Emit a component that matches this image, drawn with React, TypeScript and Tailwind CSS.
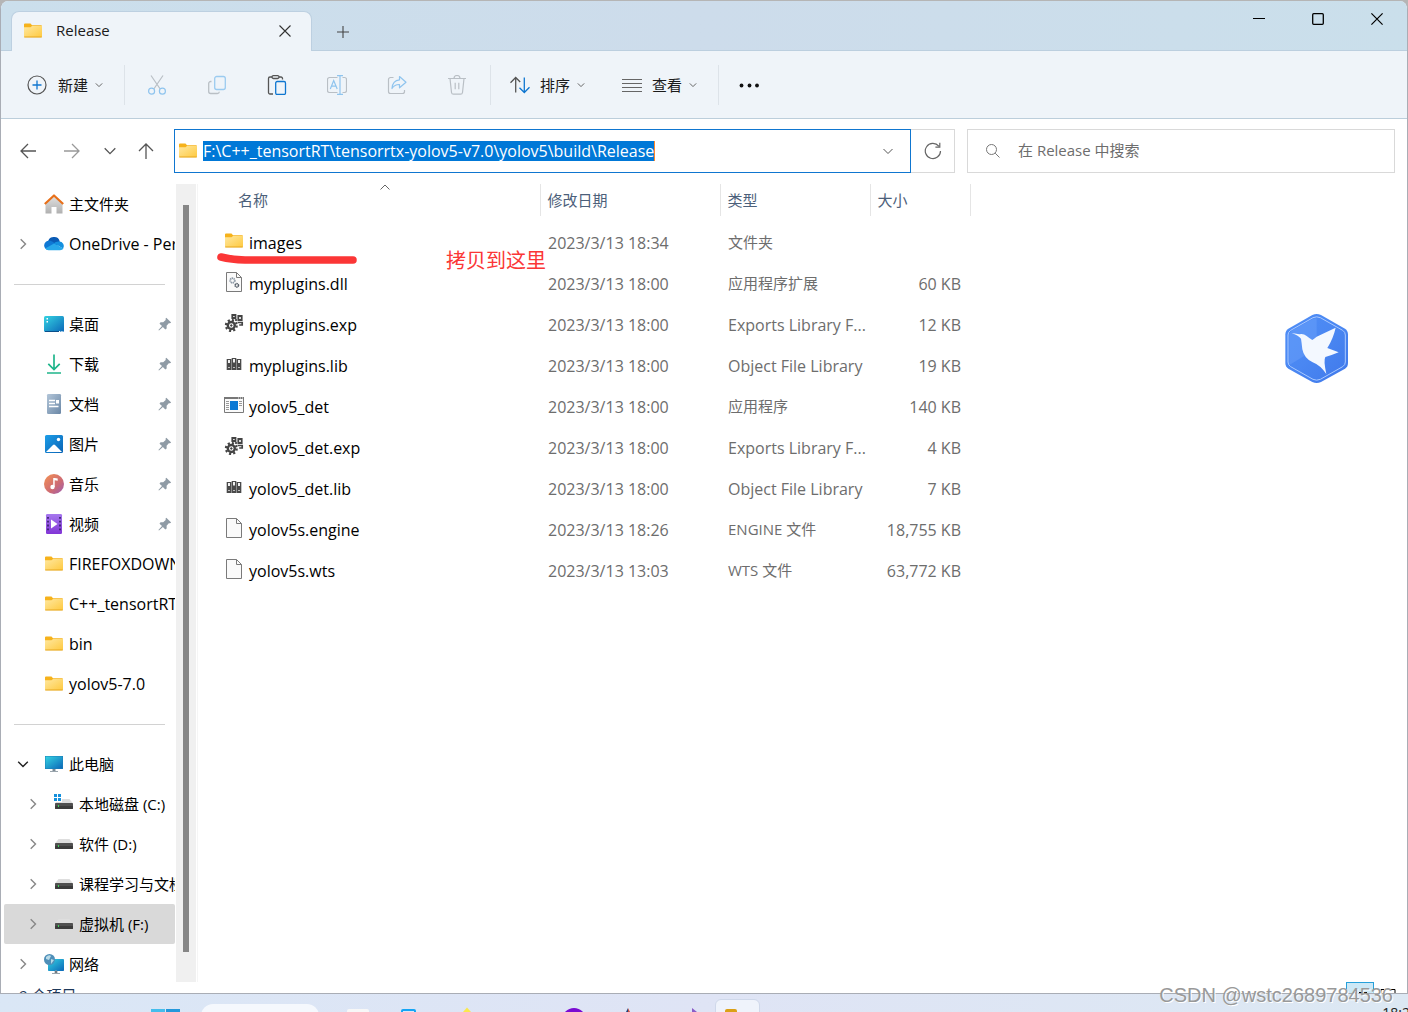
import type { ReactNode } from "react";

type IconProps = { className?: string };

const file = { stroke: "#7a7a7a", fill: "#fafafa" };

/* ---------- toolbar icons ---------- */

function Chevron({ className = "" }: IconProps) {
  return (
    <svg viewBox="0 0 8 8" className={`size-2 shrink-0 ${className}`} fill="none" stroke="#666">
      <path d="M0.8 2.4 4 5.6 7.2 2.4" />
    </svg>
  );
}

function NewIcon() {
  return (
    <svg viewBox="0 0 20 20" className="size-5" fill="none">
      <circle cx="10" cy="10" r="9" stroke="#555" strokeWidth="1.2" />
      <path d="M10 5.5v9M5.5 10h9" stroke="#0f76d0" strokeWidth="1.3" />
    </svg>
  );
}

function CutIcon() {
  return (
    <svg viewBox="0 0 20 20" className="size-5" fill="none" strokeWidth="1.2">
      <path d="M4 0.5 13.2 14M16 0.5 6.8 14" stroke="#b9bfc5" />
      <circle cx="4.6" cy="16.2" r="3" stroke="#8fc4ee" />
      <circle cx="15.4" cy="16.2" r="3" stroke="#8fc4ee" />
    </svg>
  );
}

function CopyIcon() {
  return (
    <svg viewBox="0 0 20 20" className="size-5" fill="none" strokeWidth="1.3">
      <path d="M4.5 6.500H3.700a2 2 0 0 0-2 2v8a2 2 0 0 0 2 2h6.600a2 2 0 0 0 2-1.800" stroke="#b9bfc5" />
      <rect x="7.700" y="1.500" width="10.600" height="13" rx="2" stroke="#9bcbf0" />
    </svg>
  );
}

function PasteIcon() {
  return (
    <svg viewBox="0 0 20 20" className="size-5" fill="none" strokeWidth="1.3">
      <path d="M6 19H3a1.5 1.5 0 0 1-1.5-1.5v-14A1.5 1.5 0 0 1 3 2h2M12 2h2a1.5 1.5 0 0 1 1.500 1.500V4.500" stroke="#555" />
      <rect x="5" y="0.700" width="7" height="2.800" rx="1.400" stroke="#555" />
      <rect x="8.700" y="6.500" width="9.800" height="13" rx="1.500" stroke="#0f76d0" />
    </svg>
  );
}

function RenameIcon() {
  return (
    <svg viewBox="0 0 20 20" className="size-5" fill="none" strokeWidth="1.2">
      <path d="M10.500 2.500H2.500a2 2 0 0 0-2 2v11a2 2 0 0 0 2 2h8M15.500 2.500h2a2 2 0 0 1 2 2v11a2 2 0 0 1-2 2h-2" stroke="#b9bfc5" />
      <path d="M3.300 14 6.700 5.500 10.200 14M4.500 11.200h4.500M13 0.800v18.400M10 0.700h6M10 19.300h6" stroke="#8fc4ee" />
    </svg>
  );
}

function ShareIcon() {
  return (
    <svg viewBox="0 0 20 20" className="size-5" fill="none" strokeWidth="1.2" strokeLinejoin="round">
      <path d="M6.500 2.500H3.500a2 2 0 0 0-2 2v12a2 2 0 0 0 2 2h12a2 2 0 0 0 2-2v-1.500" stroke="#b9bfc5" />
      <path d="M12.500 1.500 19 7.200l-6.500 5.600V9.500C9 9.300 7 10.500 5 13.500c.3-5 3-8.300 7.500-8.700z" stroke="#8fc4ee" />
    </svg>
  );
}

function TrashIcon() {
  return (
    <svg viewBox="0 0 20 20" className="size-5" fill="none" stroke="#b9bfc5" strokeWidth="1.2">
      <path d="M1 3.500h18M7 3.500a3 3 0 0 1 6 0M3 3.500l1.500 14a2 2 0 0 0 2 1.700h7a2 2 0 0 0 2-1.700L17 3.500M8.200 7.800v6.500M11.800 7.800v6.500" />
    </svg>
  );
}

function SortIcon() {
  return (
    <svg viewBox="0 0 20 20" className="size-5" fill="none" strokeWidth="1.300">
      <path d="M5.700 17.500V2.500M0.500 7.700 5.700 2.500l4.500 4.500" stroke="#555" />
      <path d="M14.300 2.500v15M9.500 12.700l4.800 4.800 5.200-5.200" stroke="#0f76d0" />
    </svg>
  );
}

function ViewIcon() {
  return (
    <svg viewBox="0 0 20 20" className="size-5" stroke="#666" strokeWidth="1">
      <path d="M0 4.500h20M0 8.500h20M0 12.500h20M0 16.500h20" />
    </svg>
  );
}

function ArrowIcon({ className = "" }: IconProps) {
  return (
    <svg viewBox="0 0 16 16" className={`size-4 ${className}`} fill="none" stroke="currentColor" strokeWidth="1.300">
      <path d="M16 8H1M8 1 1 8l7 7" />
    </svg>
  );
}

/* ---------- file and folder icons ---------- */

function FolderIcon() {
  return (
    <svg viewBox="0 0 20 20" className="size-5 shrink-0">
      <defs>
        <linearGradient id="folder" x1="0" y1="0" x2="1" y2="1">
          <stop offset="0" stopColor="#ffe8a0" />
          <stop offset="1" stopColor="#fec93f" />
        </linearGradient>
      </defs>
      <path d="M1 3.500q0-1 1-1h5.500l1.500 1.700h9q1 0 1 1V9H1z" fill="#f6b21b" />
      <path d="M1 6.300h6.500L9 5h10v10.300q0 1-1 1H2q-1 0-1-1z" fill="url(#folder)" />
      <path d="M1.200 16h17.600" stroke="#e6a61e" />
    </svg>
  );
}

function PageIcon({ children }: { children?: ReactNode }) {
  return (
    <svg viewBox="0 0 20 20" className="size-5 shrink-0">
      <path d="M2.500.5h10l5 5v14h-15z" fill={file.fill} stroke={file.stroke} />
      <path d="M12.500.5v5h5" fill="none" stroke={file.stroke} />
      {children}
    </svg>
  );
}

function DllIcon() {
  return (
    <PageIcon>
      <circle cx="8.500" cy="8.500" r="2.300" fill="none" stroke="#8c98a5" strokeWidth="1.800" strokeDasharray="1.300 .5" />
      <circle cx="12.800" cy="13.300" r="1.700" fill="none" stroke="#59626c" strokeWidth="1.600" strokeDasharray="1.300 .4" />
    </PageIcon>
  );
}

function ExpIcon() {
  return (
    <svg viewBox="0 0 20 20" className="size-5 shrink-0" fill="none" stroke="#444">
      <circle cx="7.300" cy="12.500" r="3.500" strokeWidth="2.400" />
      <circle cx="7.300" cy="12.500" r="5.400" strokeWidth="2.200" strokeDasharray="2.100 2.140" />
      <circle cx="7.300" cy="12.500" r=".8" fill="#444" />
      <path d="M8.300 2h3.200v3H8.300zM14.300 3h3.400v4h-3.400z" strokeWidth="1.800" />
      <path d="M13.500 9.500h4.700v2.500h-3M12 6v2" strokeWidth="1.700" />
    </svg>
  );
}

function LibIcon() {
  return (
    <svg viewBox="0 0 20 20" className="size-5 shrink-0">
      <path d="M2.500 5h5v11h-5zM7.500 4h5v12h-5zM12.500 5h5v11h-5z" fill="#8b8b8b" />
      <path d="M3 5h4v11H3zM8 4h4v12H8zM13 5h4v11h-4z" fill="#4a4a4a" />
      <path d="M4 6h2v3H4zM9 5h2v3.500H9zM14 6h2v3h-2z" fill="#f0f0f0" />
      <path d="M4 13.500h2M9 13.500h2M14 13.500h2" stroke="#bbb" />
    </svg>
  );
}

function ExeIcon() {
  return (
    <svg viewBox="0 0 20 20" className="size-5 shrink-0">
      <path d="M.5 2.500h19v15H.5z" fill="#fafafa" stroke="#7a7a7a" />
      <path d="M0 3h20" stroke="#777" strokeWidth="2" />
      <path d="M14 3h1M16 3h1M18 3h1" stroke="#eee" />
      <path d="M6 6h8v9H6z" fill="#0a78d4" />
      <path d="M2 6.500h3M2 8.500h3M2 10.500h3M2 12.500h3M2 14.500h3M15 6.500h3M15 8.500h3M15 10.500h3" stroke="#999" />
    </svg>
  );
}

/* ---------- sidebar icons ---------- */

function HomeIcon() {
  return (
    <svg viewBox="0 0 20 20" className="size-5 shrink-0">
      <defs>
        <linearGradient id="wall" x1="0" y1="0" x2="0" y2="1">
          <stop offset="0" stopColor="#e2e2e2" />
          <stop offset="1" stopColor="#b0b0b0" />
        </linearGradient>
      </defs>
      <path d="M1.500 9 10 1.500 18.500 9v10.500h-6V13h-5v6.500h-6z" fill="url(#wall)" />
      <path d="M.8 10 10 1.500 19.200 10" fill="none" stroke="#e8701a" strokeWidth="2.200" strokeLinejoin="round" />
    </svg>
  );
}

function OneDriveIcon() {
  return (
    <svg viewBox="0 0 20 20" className="size-5 shrink-0">
      <path d="M4 9a6 6 0 0 1 11.800-1.500l-3 4.500z" fill="#0a5bb5" />
      <path d="M4.500 16A4.500 4.500 0 0 1 5 6.800c2 0 3 .6 5 2l4 3-6 4z" fill="#0f78d4" />
      <path d="M10 9.300c1.300-1.200 3-2 5-1.800a4.500 4.500 0 0 1 4 7z" fill="#1490df" />
      <path d="M1.200 14.500 10 9.500l9.500 5q-1 1.700-3.500 1.700H4.500q-2.300 0-3.300-1.700z" fill="#28a8ea" />
    </svg>
  );
}

function DesktopIcon() {
  return (
    <svg viewBox="0 0 20 20" className="size-5 shrink-0">
      <defs>
        <linearGradient id="screen" x1="0" y1="0" x2="1" y2="1">
          <stop offset="0" stopColor="#35d3e2" />
          <stop offset="1" stopColor="#0b67b8" />
        </linearGradient>
      </defs>
      <rect y="2" width="20" height="16" rx="1.500" fill="url(#screen)" />
      <path d="M2.500 4h1.500v1.500H2.500zM2.500 7h1.500v1.500H2.500z" fill="#fff" />
      <path d="M1 17.500h14" stroke="#0b4f8a" />
      <path d="M15 17.500h4" stroke="#fff" strokeDasharray="1 .7" />
    </svg>
  );
}

function DownloadIcon() {
  return (
    <svg viewBox="0 0 20 20" className="size-5 shrink-0" fill="none" stroke="#1fb58b" strokeWidth="1.700">
      <path d="M10 .5v15M4.300 9.800 10 15.500l5.700-5.700M3 19h14" />
    </svg>
  );
}

function DocumentIcon() {
  return (
    <svg viewBox="0 0 20 20" className="size-5 shrink-0">
      <defs>
        <linearGradient id="doc" x1="0" y1="0" x2="1" y2="1">
          <stop offset="0" stopColor="#b3c6d9" />
          <stop offset="1" stopColor="#6a87a6" />
        </linearGradient>
      </defs>
      <rect x="3" width="14" height="20" rx="1.200" fill="url(#doc)" />
      <path d="M5 6.500h6M5 9.500h6M5 12.500h9.500" stroke="#fff" strokeWidth="1.300" />
      <path d="M12 6h3v3.500h-3z" fill="#fff" />
    </svg>
  );
}

function PictureIcon() {
  return (
    <svg viewBox="0 0 20 20" className="size-5 shrink-0">
      <defs>
        <linearGradient id="sky" x1="0" y1="0" x2="1" y2="1">
          <stop offset="0" stopColor="#1d9ee8" />
          <stop offset="1" stopColor="#0a63b5" />
        </linearGradient>
      </defs>
      <rect x="1" y="1" width="18" height="18" rx="1.500" fill="url(#sky)" />
      <path d="M2 18 9 11q1-1 2 0l7 7z" fill="#fff" />
      <circle cx="14.500" cy="5.500" r="1.700" fill="#fff" />
    </svg>
  );
}

function MusicIcon() {
  return (
    <svg viewBox="0 0 20 20" className="size-5 shrink-0">
      <defs>
        <linearGradient id="disc" x1="0" y1="0" x2="1" y2="1">
          <stop offset="0" stopColor="#f59252" />
          <stop offset=".6" stopColor="#cd6a74" />
          <stop offset="1" stopColor="#9b5fb5" />
        </linearGradient>
      </defs>
      <circle cx="10" cy="10" r="10" fill="url(#disc)" />
      <circle cx="8.500" cy="13" r="2.200" fill="#fff" />
      <path d="M9.200 13V4h1.500l3 .5v2.300l-3-.5V13z" fill="#fff" />
    </svg>
  );
}

function VideoIcon() {
  return (
    <svg viewBox="0 0 20 20" className="size-5 shrink-0">
      <defs>
        <linearGradient id="film" x1="0" y1="0" x2="0" y2="1">
          <stop offset="0" stopColor="#a678ee" />
          <stop offset="1" stopColor="#8235d6" />
        </linearGradient>
      </defs>
      <rect x="2" width="16" height="20" rx="1.200" fill="url(#film)" />
      <path d="M4 3v15M16 3v15" stroke="#3d2470" strokeWidth="1.800" strokeDasharray="1.800 2" />
      <path d="M7 5.500 13.500 10 7 14.500z" fill="#fff" />
    </svg>
  );
}

function PcIcon() {
  return (
    <svg viewBox="0 0 20 20" className="size-5 shrink-0">
      <rect x="1" y="2" width="18" height="13" fill="#1b7fb8" />
      <rect x="1.500" y="2.500" width="17" height="12" fill="url(#screen)" />
      <path d="M8.500 15h3v2h-3z" fill="#7d8a94" />
      <path d="M6 17.500h8" stroke="#9aa5ad" />
    </svg>
  );
}

function DriveBody() {
  return (
    <>
      <path d="M4.500 5h11L19 9.500H1z" fill="#dedede" />
      <rect x="1" y="9" width="18" height="6" rx=".8" fill="#505050" />
      <path d="M1 12h18v2.200q0 .8-.8.8H1.800q-.8 0-.8-.8z" fill="#3c3c3c" />
      <path d="M4 11h1v2H4z" fill="#3fd75a" />
    </>
  );
}

function DriveIcon() {
  return (
    <svg viewBox="0 0 20 20" className="size-5 shrink-0">
      <DriveBody />
    </svg>
  );
}

function SystemDriveIcon() {
  return (
    <svg viewBox="0 0 20 20" className="size-5 shrink-0">
      <DriveBody />
      <path d="M0 0h8v8H0z" fill="#fff" />
      <path d="M0 0h3v3H0zM4 0h3v3H4zM0 4h3v3H0zM4 4h3v3H4z" fill="#1590dc" />
    </svg>
  );
}

function NetworkIcon() {
  return (
    <svg viewBox="0 0 20 20" className="size-5 shrink-0">
      <rect x="4" y="5" width="16" height="12" rx=".8" fill="url(#screen)" />
      <path d="M8 19.500h8M11 17h2v2h-2z" stroke="#9aa5ad" />
      <circle cx="5.500" cy="5.500" r="5.500" fill="#4f8fb8" />
      <path d="M2 3q3-3 5-1L5 6 2 5zM7 5l3 1-3 4z" fill="#b9dbe8" />
    </svg>
  );
}

function PinIcon() {
  return (
    <svg viewBox="0 0 14 14" className="ml-auto mr-[3px] size-[14px] shrink-0" fill="#8f9ba5">
      <path d="M8.300.8 13.200 5.500 12 6.200l-1.200.1-2.200 2.500.1 2.700-1.400 1L4.900 10 1 13.500.4 13 4 9 1.500 6.700l1-1.400 2.700 0L7.700 3l-.1-1.500z" />
    </svg>
  );
}

/* ---------- data ---------- */

type Place = {
  label: string;
  icon: ReactNode;
  arrow?: "right" | "down";
  pinned?: boolean;
  child?: boolean;
  selected?: boolean;
  latin?: boolean;
};

const places: (Place | null)[] = [
  { label: "主文件夹", icon: <HomeIcon /> },
  { label: "OneDrive - Per", icon: <OneDriveIcon />, arrow: "right", latin: true },
  null,
  { label: "桌面", icon: <DesktopIcon />, pinned: true },
  { label: "下载", icon: <DownloadIcon />, pinned: true },
  { label: "文档", icon: <DocumentIcon />, pinned: true },
  { label: "图片", icon: <PictureIcon />, pinned: true },
  { label: "音乐", icon: <MusicIcon />, pinned: true },
  { label: "视频", icon: <VideoIcon />, pinned: true },
  { label: "FIREFOXDOWN", icon: <FolderIcon />, latin: true },
  { label: "C++_tensortRT", icon: <FolderIcon />, latin: true },
  { label: "bin", icon: <FolderIcon />, latin: true },
  { label: "yolov5-7.0", icon: <FolderIcon />, latin: true },
  null,
  { label: "此电脑", icon: <PcIcon />, arrow: "down" },
  { label: "本地磁盘 (C:)", icon: <SystemDriveIcon />, arrow: "right", child: true },
  { label: "软件 (D:)", icon: <DriveIcon />, arrow: "right", child: true },
  { label: "课程学习与文档", icon: <DriveIcon />, arrow: "right", child: true },
  { label: "虚拟机 (F:)", icon: <DriveIcon />, arrow: "right", child: true, selected: true },
  { label: "网络", icon: <NetworkIcon />, arrow: "right" },
];

const files = [
  { name: "images", icon: <FolderIcon />, date: "2023/3/13 18:34", type: "文件夹", size: "" },
  { name: "myplugins.dll", icon: <DllIcon />, date: "2023/3/13 18:00", type: "应用程序扩展", size: "60 KB" },
  { name: "myplugins.exp", icon: <ExpIcon />, date: "2023/3/13 18:00", type: "Exports Library F...", size: "12 KB", latin: true },
  { name: "myplugins.lib", icon: <LibIcon />, date: "2023/3/13 18:00", type: "Object File Library", size: "19 KB", latin: true },
  { name: "yolov5_det", icon: <ExeIcon />, date: "2023/3/13 18:00", type: "应用程序", size: "140 KB" },
  { name: "yolov5_det.exp", icon: <ExpIcon />, date: "2023/3/13 18:00", type: "Exports Library F...", size: "4 KB", latin: true },
  { name: "yolov5_det.lib", icon: <LibIcon />, date: "2023/3/13 18:00", type: "Object File Library", size: "7 KB", latin: true },
  { name: "yolov5s.engine", icon: <PageIcon />, date: "2023/3/13 18:26", type: "ENGINE 文件", size: "18,755 KB" },
  { name: "yolov5s.wts", icon: <PageIcon />, date: "2023/3/13 13:03", type: "WTS 文件", size: "63,772 KB" },
];

const tools = [
  { label: "Cut", icon: <CutIcon /> },
  { label: "Copy", icon: <CopyIcon /> },
  { label: "Paste", icon: <PasteIcon /> },
  { label: "Rename", icon: <RenameIcon /> },
  { label: "Share", icon: <ShareIcon /> },
  { label: "Delete", icon: <TrashIcon /> },
];

/* ---------- sections ---------- */

function TitleBar() {
  return (
    <header className="flex h-[50px] shrink-0 items-end border-b border-[#bccfdf] bg-linear-to-r from-[#cbdfec] via-[#cddceb] to-[#cadfeb] pl-[10px]">
      <div className="-mb-px flex h-10 w-[301px] items-center rounded-t-lg border border-b-0 border-[#bdd0e1] bg-[#eff4f9] pb-0.5 pl-[11px] pr-5">
        <FolderIcon />
        <span className="ml-[13px] text-[15px] font-medium text-[#1b1b1b]">Release</span>
        <button aria-label="Close tab" className="ml-auto">
          <svg viewBox="0 0 12 12" className="size-3" stroke="#333" strokeWidth="1.100">
            <path d="M.5.5l11 11M11.500.5l-11 11" />
          </svg>
        </button>
      </div>
      <button aria-label="New tab" className="mb-3 ml-[25px]">
        <svg viewBox="0 0 12 12" className="size-3" stroke="#444" strokeWidth="1.100">
          <path d="M6 0v12M0 6h12" />
        </svg>
      </button>
      <div className="mb-auto ml-auto flex h-9 items-center gap-[47px] pr-6">
        <button aria-label="Minimize">
          <svg viewBox="0 0 12 12" className="size-3" stroke="#000">
            <path d="M0 5.500h12" />
          </svg>
        </button>
        <button aria-label="Maximize">
          <svg viewBox="0 0 12 12" className="size-3" fill="none" stroke="#000" strokeWidth="1.300">
            <rect x=".7" y=".7" width="10.600" height="10.600" rx="1" />
          </svg>
        </button>
        <button aria-label="Close">
          <svg viewBox="0 0 12 12" className="size-3" stroke="#000" strokeWidth="1.200">
            <path d="M.4.4l11.200 11.200M11.600.4.4 11.600" />
          </svg>
        </button>
      </div>
    </header>
  );
}

function Toolbar() {
  return (
    <div className="flex h-[68px] shrink-0 items-center border-b border-[#bccedb] bg-[#eff4f9] pl-[26px] text-[15px] text-[#1b1b1b]">
      <button className="flex items-center">
        <NewIcon />
        <span className="ml-[11px] mr-[7px] pt-0.5">新建</span>
        <Chevron />
      </button>
      <div className="ml-[21px] mr-[2px] h-10 w-px bg-[#dde3e9]" />
      {tools.map((tool) => (
        <button key={tool.label} aria-label={tool.label} className="flex h-10 w-[60px] items-center justify-center">
          {tool.icon}
        </button>
      ))}
      <div className="ml-[3px] mr-[19px] h-10 w-px bg-[#dde3e9]" />
      <button className="flex items-center">
        <SortIcon />
        <span className="ml-[10px] mr-[7px] pt-0.5">排序</span>
        <Chevron />
      </button>
      <button className="ml-[37px] flex items-center">
        <ViewIcon />
        <span className="ml-[10px] mr-[7px] pt-0.5">查看</span>
        <Chevron />
      </button>
      <div className="ml-[21px] mr-[20px] h-10 w-px bg-[#dde3e9]" />
      <button aria-label="More">
        <svg viewBox="0 0 20 20" className="size-5" fill="#111">
          <circle cx="2.500" cy="10.500" r="1.900" />
          <circle cx="10.500" cy="10.500" r="1.900" />
          <circle cx="18" cy="10.500" r="1.900" />
        </svg>
      </button>
    </div>
  );
}

function AddressRow() {
  return (
    <div className="flex h-[65px] shrink-0 items-center pb-0.5 pl-[19px] pr-3 text-[15px]">
      <nav className="flex items-center text-[#555]">
        <button aria-label="Back">
          <ArrowIcon />
        </button>
        <button aria-label="Forward" className="ml-7 text-[#999]">
          <ArrowIcon className="rotate-180" />
        </button>
        <button aria-label="Recent" className="ml-6">
          <svg viewBox="0 0 12 12" className="size-3" fill="none" stroke="#555" strokeWidth="1.300">
            <path d="M.7 3.300 6 8.600l5.300-5.300" />
          </svg>
        </button>
        <button aria-label="Up" className="ml-[22px]">
          <ArrowIcon className="rotate-90" />
        </button>
      </nav>
      <div className="ml-5 flex h-11 min-w-0 flex-[716] items-center border border-[#0f76d0] pl-[3px] pr-4">
        <FolderIcon />
        <input
          aria-label="Address"
          defaultValue={"F:\\C++_tensortRT\\tensorrtx-yolov5-v7.0\\yolov5\\build\\Release"}
          className="ml-[5px] h-5 field-sizing-content border-r border-[#ff8728] bg-[#0078d7] text-[16px] text-white outline-none"
        />
        <button aria-label="History" className="ml-auto">
          <svg viewBox="0 0 12 12" className="size-3" fill="none" stroke="#555">
            <path d="M1.500 4 6 8.500 10.500 4" />
          </svg>
        </button>
      </div>
      <button aria-label="Refresh" className="flex h-11 w-11 items-center justify-center border border-l-0 border-[#d9d9d9]">
        <svg viewBox="0 0 18 18" className="size-[18px]" fill="none" stroke="#666" strokeWidth="1.200">
          <path d="M16.500 9A7.600 7.600 0 1 1 14.800 4.200M15.800.8V5.200h-4.400" />
        </svg>
      </button>
      <label className="ml-3 flex h-11 min-w-0 flex-[409] items-center border border-[#d9d9d9] pl-[17px]">
        <svg viewBox="0 0 16 16" className="size-4" fill="none" stroke="#777">
          <circle cx="6.500" cy="6.500" r="5" />
          <path d="m10.200 10.200 4.300 4.300" />
        </svg>
        <input
          aria-label="Search"
          placeholder="在 Release 中搜索"
          className="ml-[17px] min-w-0 flex-1 outline-none placeholder:text-[#6d6d6d]"
        />
      </label>
    </div>
  );
}

function Sidebar() {
  return (
    <aside className="flex w-[195px] shrink-0 overflow-hidden">
      <ul className="w-[175px] pl-[3px] pr-px text-[15px] text-black">
        {places.map((place, i) =>
          place === null ? (
            <li key={i} className="flex h-10 items-center pl-[10px] pr-[10px]">
              <hr className="w-full border-[#d2d2d2]" />
            </li>
          ) : (
            <li key={i}>
              <a
                href="#"
                className={`flex h-10 items-center overflow-hidden whitespace-nowrap rounded-xs ${
                  place.child ? "pl-[19px]" : "pl-[9px]"
                } ${place.selected ? "bg-[#d9d9d9]" : ""}`}
              >
                <span className="mr-[11px] flex w-5 shrink-0 justify-center">
                  {place.arrow && (
                    <svg
                      viewBox="0 0 12 12"
                      className={`size-3 ${place.arrow === "down" ? "rotate-90 text-[#222]" : "text-[#888]"}`}
                      fill="none"
                      stroke="currentColor"
                      strokeWidth="1.400"
                    >
                      <path d="M3.700 1.200 8.500 6l-4.800 4.800" />
                    </svg>
                  )}
                </span>
                {place.icon}
                <span className={`ml-[5px] ${place.latin ? "text-[16px]" : ""}`}>{place.label}</span>
                {place.pinned && <PinIcon />}
              </a>
            </li>
          )
        )}
      </ul>
      {/* Scrollbar */}
      <div className="flex w-5 justify-center bg-[#f0f0f0] pb-[30px] pt-[21px]">
        <div className="w-[6px] bg-[#868686]" />
      </div>
    </aside>
  );
}

function FileList() {
  return (
    <main className="ml-px min-w-0 flex-1 overflow-hidden border-l border-[#f5f5f5]">
      <table className="w-[772px] table-fixed border-collapse text-left text-[15px] text-[#6d6d6d]">
        <thead>
          <tr className="h-8 text-[#4c607a]">
            <th className="relative w-[342px] border-r border-[#e5e5e5] p-0 pl-10 font-normal">
              名称
              <svg viewBox="0 0 10 6" className="absolute left-[182px] top-0 h-[6px] w-[10px]" fill="none" stroke="#666">
                <path d="M.5 5.500 5 1l4.500 4.500" />
              </svg>
            </th>
            <th className="w-[180px] border-r border-[#e5e5e5] p-0 pl-[7px] font-normal">修改日期</th>
            <th className="w-[150px] border-r border-[#e5e5e5] p-0 pl-[7px] font-normal">类型</th>
            <th className="w-[100px] border-r border-[#e5e5e5] p-0 pl-[7px] font-normal">大小</th>
          </tr>
        </thead>
        <tbody>
          <tr className="h-[6px]" />
          {files.map((f) => (
            <tr key={f.name} className="h-[41px] whitespace-nowrap">
              <td className="p-0 pl-[26px] text-[16px] text-black">
                <div className="flex items-center gap-[5px]">
                  <span className="pb-[3px]">{f.icon}</span>
                  {f.name}
                </div>
              </td>
              <td className="p-0 pl-2 text-[16px]">{f.date}</td>
              <td className={`p-0 pl-2 ${f.latin ? "text-[16px]" : ""}`}>{f.type}</td>
              <td className="p-0 pr-[9px] text-right text-[16px]">{f.size}</td>
            </tr>
          ))}
        </tbody>
      </table>
    </main>
  );
}

function StatusBar() {
  return (
    <footer className="flex h-[11px] shrink-0 items-start overflow-hidden pl-[18px] pr-[11px] text-[15px] text-[#1e395b]">
      <span className="pt-[3px] leading-5">9 个项目</span>
      <div className="ml-auto flex gap-[6px]">
        <button aria-label="Details" className="h-7 w-7 border border-[#26a0da] bg-[#cce8f6]">
          <svg viewBox="0 0 26 26" className="w-full" stroke="#000">
            <path d="M6 9.500h4M12 9.500h8" />
          </svg>
        </button>
        <button aria-label="Thumbnails" className="h-7">
          <svg viewBox="0 0 16 28" className="h-7 w-4" fill="none" stroke="#000">
            <path d="M1 13V7.500h3M7 7.500h8V13" />
          </svg>
        </button>
      </div>
    </footer>
  );
}

function Taskbar() {
  return (
    <div className="flex h-[18px] shrink-0 items-start overflow-hidden bg-linear-to-r from-[#dae7f6] via-[#dfe4f5] to-[#dce8f3] pl-[151px]">
      <svg viewBox="0 0 30 18" className="h-[18px] w-[30px]">
        <path d="M0 15h14v3H0z" fill="#45bdec" />
        <path d="M15 15h14v3H15z" fill="#2498db" />
      </svg>
      <div className="ml-5 mt-[10px] h-10 w-[118px] rounded-t-xl bg-[#f5f8fd]" />
      <div className="ml-7 mt-[15px] h-6 w-[22px] rounded-xs bg-[#f7f7f7]" />
      <div className="ml-8 mt-[15px] h-6 w-[15px] rounded-xs border-2 border-[#14a5f5]" />
      <svg viewBox="0 0 12 18" className="ml-[45px] h-[18px] w-3">
        <path d="M6 13.500 10 18H2z" fill="#fbe84c" />
      </svg>
      <div className="ml-[89px] mt-[14px] size-6 rounded-full bg-[#7a0bd2]" />
      <svg viewBox="0 0 12 18" className="ml-9 h-[18px] w-3">
        <path d="M6 14v4H4z" fill="#1f3f77" />
        <path d="M6 14l2 4H6z" fill="#cc4b3c" />
      </svg>
      <svg viewBox="0 0 12 18" className="ml-[54px] h-[18px] w-3">
        <path d="M4 14l5 4H4z" fill="#8a5cc7" />
      </svg>
      <div className="ml-[15px] mt-[5px] h-10 w-[45px] rounded-t-md border border-[#cfd8ea] bg-[#eff3fb] pl-[9px] pt-[9px]">
        <div className="h-2 w-3 rounded-xs bg-[#dba016]" />
      </div>
      <span className="-mr-[10px] ml-auto pt-[9px] text-[14px] leading-5 text-[#222]">18:23</span>
    </div>
  );
}

/* Floating shortcut badge with the bird logo */
function BirdBadge() {
  return (
    <svg viewBox="0 0 270 285" className="absolute right-12 top-[300px] h-[95px] w-[90px]">
      <defs>
        <linearGradient id="badge" x1="0" y1="0" x2="1" y2="1">
          <stop offset="0" stopColor="#4f8ef7" />
          <stop offset=".5" stopColor="#4a87f2" />
          <stop offset="1" stopColor="#3f78ea" />
        </linearGradient>
      </defs>
      <path d="M127 45q13-6 26 0l72 41q9 6 9 17v86q0 11-9 17l-72 40q-13 6-26 0l-72-40q-9-6-9-17v-86q0-11 9-17z" fill="url(#badge)" />
      <path d="M129 53q11-5 22 0l67 38q8 5 8 14v81q0 9-8 14l-67 38q-11 5-22 0l-67-38q-8-5-8-14v-81q0-9 8-14z" fill="none" stroke="#a9c9ff" strokeWidth="3" />
      <path d="M140 55v90L58 195v-90q0-8 7-13l64-36z" fill="#6ca2fb" opacity=".45" />
      <path d="M65 99 88 103q12-3 22 5 10 8 17 12 6-4 13-10 25-12 57-27-7 32-25 61l34 13q-16 7-40 14-6 9 3 51-19-27-41-35-26-12-31-39-2-20-4-32-9-10-28-17z" fill="#f3f8ff" />
    </svg>
  );
}

export default function App() {
  return (
    <div className="relative flex h-screen flex-col overflow-hidden bg-[#b5b5b5] font-['Open_Sans','Noto_Sans_CJK_SC',sans-serif]">
      {/* Explorer window */}
      <div className="mt-px flex min-h-0 flex-1 flex-col overflow-hidden rounded-t-lg border-x border-b border-[#a9adb5] bg-white">
        <TitleBar />
        <Toolbar />
        <AddressRow />
        <div className="flex min-h-0 flex-1">
          <Sidebar />
          <FileList />
        </div>
        <StatusBar />
      </div>
      <Taskbar />

      {/* Hand-drawn note */}
      <svg viewBox="0 0 140 12" className="absolute left-[217px] top-[253px] h-3 w-[140px]" fill="none">
        <path d="M4 4Q14 6.500 28 7H136" stroke="#fb3636" strokeWidth="7.500" strokeLinecap="round" />
      </svg>
      <p className="absolute left-[446px] top-[247px] text-[20px] leading-7 text-[#fb3636]">拷贝到这里</p>

      <BirdBadge />

      <p className="absolute bottom-[5px] right-[15px] font-['Liberation_Sans',sans-serif] text-[20px] leading-6 text-[#999] [text-shadow:1px_1px_0_#fff]">
        CSDN @wstc2689784536
      </p>
    </div>
  );
}
